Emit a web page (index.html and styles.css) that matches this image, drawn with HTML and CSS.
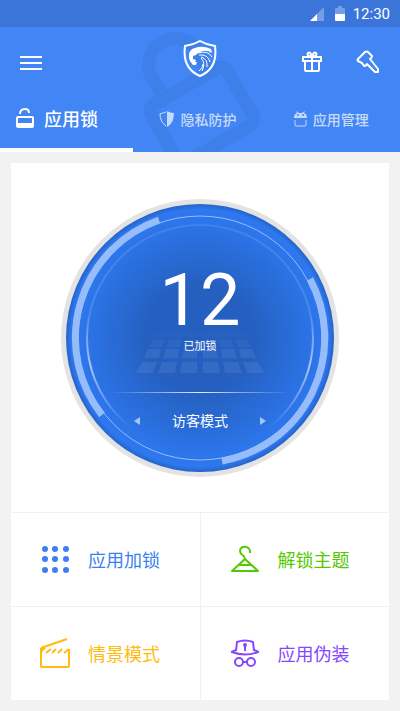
FILE: index.html
```html
<!DOCTYPE html>
<html lang="zh-CN">
<head>
  <meta charset="UTF-8" />
  <meta name="viewport" content="width=device-width, initial-scale=1.0"/>
  <title>应用锁</title>
  <link rel="stylesheet" href="styles.css">
</head>
<body>

  <div class="status-bar">
    <svg width="14" height="14" viewBox="0 0 14 14">
      <path d="M14 0V14H0Z" fill="#fff" opacity=".3"/>
      <path d="M7 7V14H0Z" fill="#fff"/>
    </svg>
    <svg class="battery" width="10" height="16" viewBox="0 0 10 16">
      <path d="M3 0h4v2h2q1 0 1 1v5H0V3q0-1 1-1h2z" fill="#fff" opacity=".3"/>
      <path d="M0 8h10v6q0 1-1 1H1q-1 0-1-1z" fill="#fff"/>
    </svg>
    <span>12:30</span>
  </div>

  <header class="header">
    <svg class="header-lock" width="116" height="125" viewBox="0 0 116 125" fill="none" stroke="#3e7fe9" stroke-width="13">
      <path d="M17 59L8 45A26 26 0 0 1 54 19L62 34"/>
      <rect x="-44" y="-33" width="88" height="66" rx="8" transform="translate(58 82) rotate(-30)"/>
    </svg>

    <div class="toolbar">
      <button class="icon-button" aria-label="菜单">
        <svg width="22" height="14" viewBox="0 0 22 14" stroke="#fff" stroke-width="2">
          <path d="M0 1h22M0 7h22M0 13h22"/>
        </svg>
      </button>
      <svg class="logo" width="34" height="37" viewBox="0 0 34 37">
        <path d="M17 1Q24 5 32 6C34 21 29 31 17 36C5 31 0 21 2 6Q10 5 17 1Z" fill="none" stroke="#fff" stroke-width="2"/>
        <path d="M6 14Q7 9 12 8Q19 5 28 9L29 13Q24 10 20 11Q15 12 13 15L10 16L10 19L13 20L12 22L14 22L13 25L10 25Q5 20 6 14Z" fill="#fff"/>
        <path d="M15 13Q25 10 29 17M16 15Q25 14 27 22M18 17Q25 19 24 27M18 18Q23 23 19 31M16 31Q20 28 20 24" fill="none" stroke="#fff"/>
      </svg>
      <div class="actions">
        <button class="icon-button" aria-label="礼物">
          <svg width="20" height="21" viewBox="0 0 20 21" fill="none" stroke="#fff" stroke-width="2">
            <path d="M1 6h18v4H1zM3 10v9q0 1 1 1h12q1 0 1-1v-9M10 5v15"/>
            <path d="M10 5Q4 5 6 2Q8 0 10 5Q12 0 14 2Q16 5 10 5Z"/>
          </svg>
        </button>
        <button class="icon-button" aria-label="主题">
          <svg width="24" height="24" viewBox="0 0 24 24" fill="none" stroke="#fff" stroke-width="2" stroke-linejoin="round">
            <path d="M2 9L9 2Q11 1 12 2L16 6Q16 8 14 9L22 19V22H19L11 14Q10 16 8 16L6 13L2 11Q1 10 2 9Z"/>
          </svg>
        </button>
      </div>
    </div>

    <nav class="tabs">
      <a class="tab active" href="#lock">
        <svg width="18" height="20" viewBox="0 0 18 20" fill="none" stroke="#fff" stroke-width="2">
          <path d="M4 6Q4 1 9 1Q13 1 13 5"/>
          <rect x="1" y="9" width="16" height="10" rx="1"/>
          <path d="M1 17h16" stroke-width="4"/>
        </svg>
        <span>应用锁</span>
      </a>
      <a class="tab" href="#privacy">
        <svg width="15" height="16" viewBox="0 0 15 16">
          <path d="M8 0Q11 2 15 2Q15 12 8 16Z" fill="#fff"/>
          <path d="M7 1Q4 2 1 3Q1 11 7 15" fill="none" stroke="#fff"/>
        </svg>
        <span>隐私防护</span>
      </a>
      <a class="tab" href="#apps">
        <svg width="13" height="16" viewBox="0 0 13 16">
          <path d="M0 7Q0 3 3 2L2 0L5 2H8L11 0L10 2Q13 3 13 7Z" fill="#fff"/>
          <path d="M1 9v5q0 1 1 1h9q1 0 1-1V9" fill="none" stroke="#fff"/>
          <circle cx="4" cy="4" r="1" fill="#4285f4"/>
          <circle cx="9" cy="4" r="1" fill="#4285f4"/>
        </svg>
        <span>应用管理</span>
      </a>
    </nav>
  </header>

  <main class="card">
    <section class="dial-area">
      <div class="dial">
        <svg class="dial-art" viewBox="-139 -139 278 278">
          <defs>
            <radialGradient id="face">
              <stop offset="0" stop-color="#2560c0"/>
              <stop offset=".4" stop-color="#2560c0"/>
              <stop offset=".85" stop-color="#2c74e8"/>
              <stop offset=".96" stop-color="#2e78f0"/>
              <stop offset="1" stop-color="#2563c8"/>
            </radialGradient>
            <linearGradient id="inner" x1="0" y1="0" x2="0" y2="1">
              <stop offset="0" stop-color="#fff" stop-opacity=".1"/>
              <stop offset=".4" stop-color="#fff" stop-opacity=".15"/>
              <stop offset=".62" stop-color="#fff" stop-opacity=".6"/>
              <stop offset=".9" stop-color="#fff" stop-opacity="0"/>
            </linearGradient>
            <g id="tiles">
              <path d="M-58 24h15l-4 11h-17zM-38 24h15l-2 11h-17zM-18 24h15v11h-17z"/>
              <path d="M-52 11h13l-2 9h-15zM-34 11h13l-1 9h-15zM-16 11h13v9h-15z"/>
              <path d="M-47 2h12l-3 7h-13zM-31 2h12l-1 7h-14zM-15 2h12v7h-13z" opacity=".6"/>
              <path d="M-44 -5h12l-2 4h-12zM-29 -5h12l-1 4h-12zM-14 -5h11v4h-12z" opacity=".3"/>
            </g>
          </defs>
          <circle r="139" fill="#e3e3e3"/>
          <circle r="134" fill="url(#face)"/>
          <g fill="#fff" opacity=".07">
            <use href="#tiles"/>
            <use href="#tiles" transform="scale(-1 1)"/>
          </g>
          <circle r="113" fill="none" stroke="url(#inner)" stroke-width="2"/>
          <g fill="none" stroke="#97bcfa">
            <circle r="122" stroke-width="1"/>
            <path d="M-41 -118A125 125 0 0 0 -98 77" stroke-width="7"/>
            <path d="M110 -59A125 125 0 0 1 22 123" stroke-width="7"/>
          </g>
        </svg>
        <strong class="count">12</strong>
        <span class="count-label">已加锁</span>
        <div class="mode">
          <button class="arrow" aria-label="上一个">
            <svg width="6" height="8" viewBox="0 0 6 8"><path d="M6 0v8L0 4z" fill="#a8c6fa"/></svg>
          </button>
          <span>访客模式</span>
          <button class="arrow" aria-label="下一个">
            <svg width="6" height="8" viewBox="0 0 6 8"><path d="M0 0v8L6 4z" fill="#a8c6fa"/></svg>
          </button>
        </div>
      </div>
    </section>

    <nav class="features">
      <a class="feature blue" href="#app-lock">
        <svg width="30" height="30" viewBox="0 0 30 30" fill="currentColor">
          <circle cx="5" cy="5" r="3"/>
          <circle cx="15" cy="5" r="3"/>
          <circle cx="26" cy="5" r="3"/>
          <circle cx="5" cy="15" r="3"/>
          <circle cx="15" cy="15" r="3"/>
          <circle cx="26" cy="15" r="3"/>
          <circle cx="5" cy="26" r="3"/>
          <circle cx="15" cy="26" r="3"/>
          <circle cx="26" cy="26" r="3"/>
        </svg>
        <span>应用加锁</span>
      </a>
      <a class="feature green" href="#themes">
        <svg width="30" height="30" viewBox="0 0 30 30" fill="none" stroke="currentColor" stroke-width="2">
          <path d="M20 9C21 1 10 1 10 7C10 12 15 10 15 15L2 27H28L15 15M9 21H21" stroke-linejoin="round"/>
        </svg>
        <span>解锁主题</span>
      </a>
      <a class="feature yellow" href="#scenes">
        <svg width="30" height="30" viewBox="0 0 30 30" fill="none" stroke="currentColor" stroke-width="2">
          <path d="M1 10V28q0 1 1 1H28q1 0 1-1V11M1 10L27 1" stroke-linejoin="round"/>
          <path d="M1 10H6L1 15Z" fill="currentColor" stroke="none"/>
          <path d="M6 15L11 11M12 15L16 11M18 15L22 11M24 15L29 11"/>
        </svg>
        <span>情景模式</span>
      </a>
      <a class="feature purple" href="#disguise">
        <svg width="30" height="30" viewBox="0 0 30 30" fill="none" stroke="currentColor" stroke-width="2">
          <path d="M6 13L7 4Q15 1 23 4L24 13M6 12Q1 14 2 14Q15 19 28 14Q29 14 24 12" stroke-linejoin="round"/>
          <path d="M15 7v6"/>
          <circle cx="15" cy="7" r="1"/>
          <circle cx="9" cy="24" r="4"/>
          <circle cx="21" cy="24" r="4"/>
          <path d="M13 24h4"/>
        </svg>
        <span>应用伪装</span>
      </a>
    </nav>
  </main>

</body>
</html>
```
FILE: styles.css
```css
* {
  box-sizing: border-box;
}

body {
  margin: 0;
  background-color: #f2f2f2;
  font-family: Roboto, "Noto Sans CJK SC", sans-serif;
  color: white;
}

a {
  color: inherit;
  text-decoration: none;
}

button {
  padding: 0;
  border: none;
  background: none;
  cursor: pointer;
}

svg {
  display: block;
  flex: none;
}

.status-bar {
  display: flex;
  align-items: center;
  justify-content: flex-end;
  height: 27px;
  padding-right: 10px;
  background-color: #3b75d9;
  font-size: 15px;
}

.battery {
  margin: 0 8px 0 11px;
}

.header {
  position: relative;
  overflow: hidden;
  background-color: #4285f4;
}

/* big faded padlock behind the toolbar */
.header-lock {
  position: absolute;
  top: 6px;
  left: 36%;
  overflow: visible;
}

.toolbar {
  position: relative;
  display: grid;
  grid-template-columns: 1fr auto 1fr;
  align-items: center;
  height: 72px;
  padding: 0 20px;
}

.icon-button {
  display: flex;
}

.logo {
  margin-bottom: 10px;
}

.actions {
  display: flex;
  align-items: center;
  justify-content: flex-end;
  gap: 34px;
  padding-bottom: 3px;
}

.tabs {
  position: relative;
  display: grid;
  grid-template-columns: repeat(3, 1fr);
  height: 53px;
}

.tab {
  display: flex;
  align-items: center;
  justify-content: center;
  gap: 6px;
  padding-right: 4px;
  padding-bottom: 14px;
  font-size: 14px;
  font-weight: 500;
}

.tab:not(.active) {
  opacity: 0.7;
}

.tab.active {
  justify-content: flex-start;
  gap: 10px;
  padding-left: 16px;
  padding-bottom: 11px;
  border-bottom: 4px solid white;
  font-size: 18px;
}

.card {
  margin: 11px;
  background-color: white;
}

.dial-area {
  display: flex;
  justify-content: center;
  padding: 36px 0 35px;
}

.dial {
  position: relative;
  display: flex;
  flex-direction: column;
  align-items: center;
  width: 278px;
  height: 278px;
  padding-top: 64px;
}

.dial-art {
  position: absolute;
  inset: 0;
}

.count,
.count-label,
.mode {
  position: relative;
}

.count {
  font-size: 72px;
  font-weight: 400;
  line-height: 76px;
}

.count-label {
  font-size: 11px;
  line-height: 16px;
}

.mode {
  display: flex;
  align-items: center;
  justify-content: space-between;
  width: 180px;
  margin-top: 37px;
  padding: 19px 24px;
  font-size: 14px;
  line-height: 20px;
}

.mode::before {
  content: "";
  position: absolute;
  top: 0;
  left: 0;
  right: 0;
  height: 1px;
  background: linear-gradient(to right, transparent, #e0ebfd, transparent);
}

.features {
  display: grid;
  grid-template-columns: 1fr 1fr;
  gap: 1px;
  border-top: 1px solid #f0f0f0;
  background-color: #f0f0f0;
}

.feature {
  display: flex;
  align-items: center;
  gap: 18px;
  height: 93px;
  padding-left: 29px;
  padding-bottom: 1px;
  background-color: white;
  font-size: 18px;
}

.blue {
  color: #3b7ff0;
}

.green {
  color: #54c800;
}

.yellow {
  color: #ffbb10;
}

.purple {
  color: #8648ff;
}
```
